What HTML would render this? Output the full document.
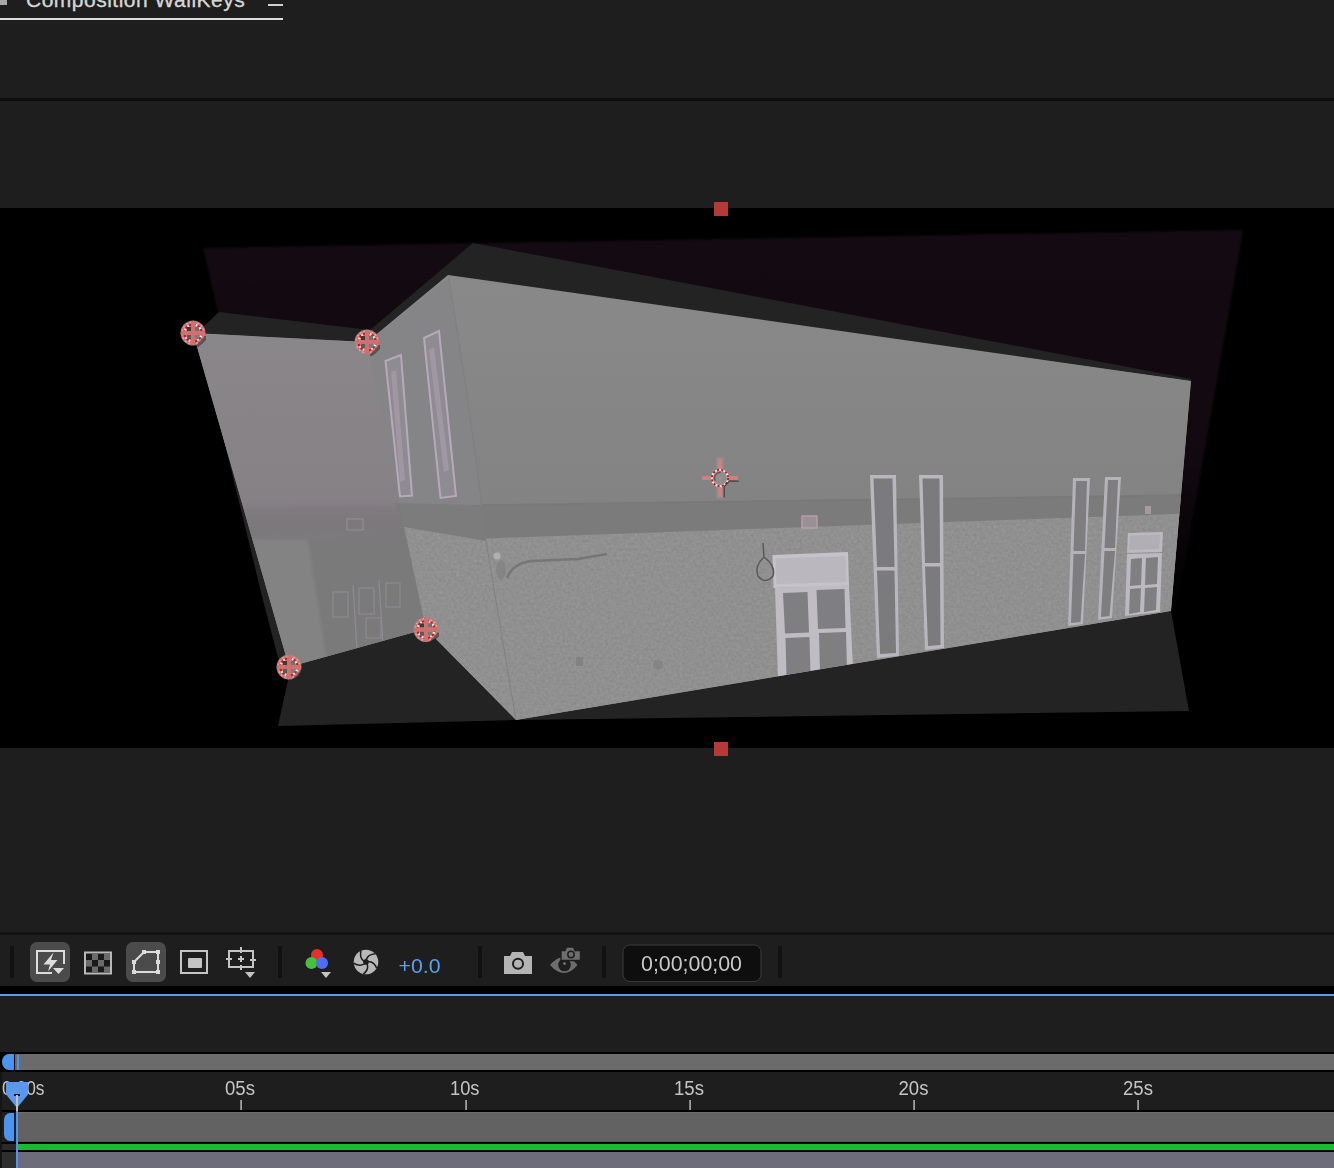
<!DOCTYPE html>
<html><head><meta charset="utf-8">
<style>
html,body{margin:0;padding:0;background:#1e1e1e;width:1334px;height:1168px;overflow:hidden;font-family:"Liberation Sans",sans-serif;}
svg{position:absolute;left:0;top:0;display:block}
</style></head>
<body>
<svg width="1334" height="1168" viewBox="0 0 1334 1168">
<defs>
  <linearGradient id="gLeft" x1="0" y1="333" x2="0" y2="667" gradientUnits="userSpaceOnUse">
    <stop offset="0" stop-color="#8b888a"/>
    <stop offset="0.5" stop-color="#858285"/>
    <stop offset="0.56" stop-color="#7c7b7d"/>
    <stop offset="1" stop-color="#7e7e7e"/>
  </linearGradient>
  <linearGradient id="gPurple" x1="0" y1="230" x2="0" y2="620" gradientUnits="userSpaceOnUse">
    <stop offset="0" stop-color="#140b12"/>
    <stop offset="0.55" stop-color="#130a11"/>
    <stop offset="1" stop-color="#000000"/>
  </linearGradient>
</defs>
<!-- panel bg -->
<rect x="0" y="0" width="1334" height="1168" fill="#1e1e1e"/>
<!-- top tab -->
<rect x="0" y="0" width="7" height="5" fill="#a8a8a8"/>
<text x="26" y="7.3" font-family="Liberation Sans" font-size="21" letter-spacing="0.5" fill="#d6d6d6" stroke="#d6d6d6" stroke-width="0.35">Composition WallKeys</text>
<rect x="268" y="4" width="15" height="2" fill="#cfcfcf"/>
<rect x="0" y="18" width="283" height="2" fill="#dcdcdc"/>
<rect x="0" y="98" width="1334" height="3" fill="#0e0e0e"/>

<!-- comp black -->
<rect x="0" y="208" width="1334" height="540" fill="#000"/>
<!-- purple plate -->
<filter id="fPurp" x="-5%" y="-5%" width="110%" height="110%" color-interpolation-filters="sRGB"><feGaussianBlur stdDeviation="1.2"/></filter>
<polygon points="203,248 1243,230 1175,620 291,620" fill="url(#gPurple)" filter="url(#fPurp)"/>
<!-- dark gray shape -->
<polygon points="204,326 219,312 370,330 473,243 1191,379 1171,611 1189,711 516,720 278,726 288,680 277,654 263,600 208,375 197,338" fill="#232323"/>
<!-- PHOTO START -->
<defs>
  <clipPath id="cpPhoto"><polygon points="193,333 367,342 448,275 1191,381 1171,611 516,720 426,629 289,667"/></clipPath>
  <clipPath id="cpLeft"><polygon points="193,333 367,342 426,629 289,667"/></clipPath>
  <clipPath id="cpFront"><polygon points="449,278 1191,381 1171,611 516,720 486,541 482,506 467,394"/></clipPath>
  <linearGradient id="gWallL" x1="0" y1="333" x2="0" y2="667" gradientUnits="userSpaceOnUse">
    <stop offset="0" stop-color="#8a878a"/>
    <stop offset="0.5" stop-color="#858185"/>
    <stop offset="0.535" stop-color="#827d82"/>
    <stop offset="0.56" stop-color="#7d7b7e"/>
    <stop offset="1" stop-color="#7b7b7b"/>
  </linearGradient>
  <linearGradient id="gUpper" x1="0" y1="280" x2="0" y2="505" gradientUnits="userSpaceOnUse">
    <stop offset="0" stop-color="#898989"/>
    <stop offset="1" stop-color="#838383"/>
  </linearGradient>
  <filter id="fNoise" x="0" y="0" width="100%" height="100%" color-interpolation-filters="sRGB">
    <feTurbulence type="fractalNoise" baseFrequency="0.35" numOctaves="3" seed="7"/>
    <feColorMatrix type="matrix" values="1.4 0 0 0 -0.2  1.4 0 0 0 -0.2  1.4 0 0 0 -0.2  0 0 0 0 1"/>
    <feComposite operator="in" in2="SourceGraphic"/>
  </filter>
  <filter id="fSoft" color-interpolation-filters="sRGB"><feGaussianBlur stdDeviation="0.6"/></filter>
  <filter id="fSoft2" x="-10%" y="-10%" width="120%" height="120%" color-interpolation-filters="sRGB"><feGaussianBlur stdDeviation="1.6"/></filter>
</defs>
<g clip-path="url(#cpPhoto)">
  <rect x="180" y="260" width="1020" height="470" fill="#888888"/>
  <!-- left wing -->
  <g clip-path="url(#cpLeft)">
    <rect x="180" y="320" width="260" height="360" fill="url(#gWallL)"/>
    <g filter="url(#fSoft2)">
    <polygon points="180,508 440,504 440,532 180,538" fill="#7c797c" opacity="0.55"/>
    <line x1="180" y1="508" x2="440" y2="504" stroke="#8e7f88" stroke-width="1.5" opacity="0.7"/>
    <polygon points="308,540 410,532 430,680 330,680" fill="#7a7a7a" opacity="0.75"/>
    <polygon points="250,540 308,540 330,680 260,680" fill="#888888" opacity="0.6"/>
    </g>
    
    <rect x="347" y="519" width="16" height="11" fill="none" stroke="#9a979b" stroke-width="1.2" opacity="0.7"/>
    <g fill="none" stroke="#928d95" stroke-width="1.3" opacity="0.85">
      <rect x="333" y="592" width="15" height="25"/><rect x="359" y="588" width="15" height="26"/><rect x="386" y="583" width="14" height="24"/>
      <rect x="366" y="618" width="15" height="20"/>
      <line x1="353" y1="585" x2="357" y2="650"/>
      <line x1="379" y1="580" x2="383" y2="645"/>
    </g>
  </g>
  <!-- side face -->
  <polygon points="367,342 449,278 467,394 482,506 486,541 404,527" fill="#858486"/>
  
  <polygon points="395,503 482,505 486,541 404,527" fill="#7b7b7b" opacity="0.8"/>
  <polygon points="404,527 486,541 516,720 426,629" fill="#919191"/>
  <polygon points="404,527 486,541 516,720 426,629" fill="#fff" filter="url(#fNoise)" opacity="0.055"/>
  <!-- pink windows on side face -->
  <g filter="url(#fSoft)">
  <polygon points="385.5,361 401,355 412,495.5 400,496.5" fill="#8f8b92" stroke="#b6a9ba" stroke-width="2"/>
  <polygon points="391,372 396,370 405,480 400,482" fill="#a89dab" opacity="0.7"/>
  <polygon points="424,338 439,331 456,496 440.5,498" fill="#8f8b92" stroke="#b6a9ba" stroke-width="2"/>
  <polygon points="429,350 434,347 449,470 444,472" fill="#a89dab" opacity="0.7"/>
  </g>
  <!-- front face -->
  <g clip-path="url(#cpFront)">
    <rect x="440" y="260" width="760" height="470" fill="url(#gUpper)"/>
    <!-- ledge band -->
    <polygon points="440,505 1200,494 1200,516 440,540" fill="#7b7b7b"/>
    <line x1="440" y1="506" x2="1200" y2="495" stroke="#797979" stroke-width="1.5"/>
    <!-- brick -->
    <polygon points="440,540 1200,513 1200,730 440,730" fill="#919191"/>
    <polygon points="440,540 1200,513 1200,730 440,730" fill="#fff" filter="url(#fNoise)" opacity="0.055"/>
    <!-- pipe -->
    <path d="M507,578 Q513,563 532,561 L578,559 L607,554" fill="none" stroke="#6e6e6e" stroke-width="2.4" opacity="0.75" filter="url(#fSoft)"/>
    <circle cx="658" cy="665" r="5" fill="#7a7a7a" opacity="0.5"/>
    <rect x="576" y="657" width="7" height="9" fill="#7a7a7a" opacity="0.6"/>
    <!-- sign -->
    <rect x="802" y="516" width="15" height="12" fill="#9a8f95" stroke="#c0a4ac" stroke-width="1.2"/>
    <rect x="1145" y="506" width="6" height="8" fill="#a59aa0"/>
    <g filter="url(#fSoft)">
    <!-- door 1 -->
    <polygon points="772.5,555 848,552 849,586 773.5,588" fill="#c6c2ca"/>
    <polygon points="775.5,558.5 845.5,556 846.5,582 776.5,584" fill="#bab7be"/>
    <polygon points="775,588 849,585 853,668 778,678" fill="#c0bcc4"/>
    <polygon points="783,593 807.5,592 809,632.5 785,633.5" fill="#7f7f81"/>
    <polygon points="816.5,590 844.5,589 845.5,628 818,629" fill="#7f7f81"/>
    <polygon points="785.5,638 809.5,637 810.5,676 786.5,677" fill="#7f7f81"/>
    <polygon points="819,633 846,632 847,670 820,672" fill="#7f7f81"/>
    <!-- windows -->
    <polygon points="870,475 896,475 899,656 877,658" fill="#bab6be"/>
    <polygon points="873.5,478.5 892.5,478.5 894.5,567 877,567" fill="#7b7b7d"/>
    <polygon points="877,570.5 894.5,570.5 896,653 880,654" fill="#7b7b7d"/>
    <polygon points="919,475 943,475 944,648 925,650" fill="#bab6be"/>
    <polygon points="922.5,478.5 939.5,478.5 940,563 925,563" fill="#7b7b7d"/>
    <polygon points="925,566.5 940,566.5 940.5,645 928,646" fill="#7b7b7d"/>
    <polygon points="1073,478 1090,478 1083,624 1068,626" fill="#b5b2b9"/>
    <polygon points="1076,481 1087,481 1085,551 1073.5,551" fill="#7e7e80"/>
    <polygon points="1073.5,554 1085,554 1080.5,622 1071,623" fill="#7e7e80"/>
    <polygon points="1105,477 1121,477 1112,618 1098,620" fill="#b5b2b9"/>
    <polygon points="1108,480 1118,480 1115,548 1104.5,548" fill="#7e7e80"/>
    <polygon points="1104.5,551 1115,551 1109.5,616 1101,617" fill="#7e7e80"/>
    <!-- door 2 -->
    <polygon points="1128,533 1163,532 1162,552 1127,553" fill="#bdb9c1"/>
    <polygon points="1130,535.5 1160,534.5 1159,549 1129,550" fill="#b1aeb5"/>
    <polygon points="1127,554 1162,553 1160,612 1125,616" fill="#bdb9c1"/>
    <polygon points="1131,559 1142,558 1141,585 1130,586" fill="#7f7f81"/>
    <polygon points="1146,558 1158,557 1157,584 1145,585" fill="#7f7f81"/>
    <polygon points="1130,589 1141,588 1140,612 1129,614" fill="#7f7f81"/>
    <polygon points="1145,588 1157,587 1156,610 1144,612" fill="#7f7f81"/>
    </g>
    <!-- hook -->
    <path d="M763,543 L764,557 Q754,566 758,576 Q765,585 773,576 Q776,566 764,557" fill="none" stroke="#5a5a5a" stroke-width="1.5" filter="url(#fSoft)"/>
  </g>

    <ellipse cx="501" cy="570" rx="5" ry="10" fill="#7e7e7e" opacity="0.6" filter="url(#fSoft)"/>
    <circle cx="497" cy="556" r="3.5" fill="#b8b8b8" opacity="0.8" filter="url(#fSoft)"/>
  <!-- building corner line -->
  <polyline points="449,278 467,394 482,506 486,541 516,720" fill="none" stroke="#7c7c7c" stroke-width="1.2" opacity="0.55"/>
</g>
<!-- PHOTO END -->


<!-- markers -->
<defs>
 <g id="mk">
  <circle r="12.3" fill="#c97272" stroke="#8a8a8a" stroke-width="0.8" stroke-opacity="0.6"/>
  <circle r="11" fill="none" stroke="#e0c4c4" stroke-width="1.6" stroke-dasharray="2 2" opacity="0.6"/>
  <circle r="8.6" fill="none" stroke="#f0e4e4" stroke-width="2.2"/>
  <circle r="8.6" fill="none" stroke="#c21d1d" stroke-width="2.2" stroke-dasharray="2.5 2"/>
  <circle r="6.6" fill="#a09a9a"/>
  <rect x="-6" y="-6" width="4" height="4" fill="#3a3a3a"/>
  <rect x="2" y="-6" width="4" height="4" fill="#707070"/>
  <rect x="-6" y="2" width="4" height="4" fill="#5a5a5a"/>
  <rect x="2" y="2" width="4" height="4" fill="#7a7a7a"/>
  <rect x="-2" y="-12" width="4" height="24" fill="#cf7070"/>
  <rect x="-12" y="-2" width="24" height="4" fill="#cf7070"/>
  <path d="M11.5,3 L13,3 L13,7 L9,11 L5,14 L3,14 L3,12.5 Z" fill="#222" opacity="0.5"/>
 </g>
</defs>
<use href="#mk" x="193" y="333"/>
<use href="#mk" x="367" y="342"/>
<use href="#mk" x="426" y="629.5"/>
<use href="#mk" x="289" y="667"/>
<g transform="translate(720,478)">
  <rect x="-2" y="-19" width="4" height="38" fill="#cc8080"/>
  <rect x="-18" y="-2" width="36" height="4" fill="#cc8080"/>
  <rect x="-3" y="-20" width="6" height="40" fill="none" stroke="#b0b0b0" stroke-width="0.8" opacity="0.5"/>
  <circle r="8.2" fill="#909090" stroke="#f0e0e0" stroke-width="2"/>
  <circle r="8.2" fill="none" stroke="#c21d1d" stroke-width="2" stroke-dasharray="2.2 2.2"/>
  <circle r="5.5" fill="#8e8e8e" stroke="#5a5a5a" stroke-width="1.4" stroke-dasharray="12 30" transform="rotate(150)"/>
  <rect x="-1.5" y="-1.5" width="3" height="3" fill="#b08888"/>
  <path d="M18.5,3.2 H9.5 L4.2,8.5 V19.5" fill="none" stroke="#333" stroke-width="1.2" opacity="0.85"/>
</g>

<!-- red handles -->
<rect x="714" y="202" width="14" height="14" fill="#b83838"/>
<rect x="714" y="742" width="14" height="14" fill="#b83838"/>

<!-- toolbar -->
<rect x="0" y="932" width="1334" height="3" fill="#111"/>
<rect x="0" y="986" width="1334" height="8" fill="#000"/>
<rect x="0" y="994" width="1334" height="2" fill="#5b9bf0"/>


<!-- toolbar icons -->
<rect x="10" y="946" width="4" height="32" fill="#111"/>
<rect x="30" y="942" width="40" height="40" rx="7" fill="#4b4b4b"/>
<path d="M64,964 V951 H37 V973 H52" fill="none" stroke="#dcdcdc" stroke-width="2"/>
<path d="M53.5,952.5 L43.5,964.5 H50 L48,971.5 L57.5,960 H51 Z" fill="#dcdcdc"/>
<path d="M53,968 H64 L58.5,974 Z" fill="#dcdcdc"/>
<rect x="85" y="952.5" width="26" height="21" fill="#1a1a1a" stroke="#b8b8b8" stroke-width="2"/>
<g fill="#6b6b6b">
 <rect x="92" y="953.5" width="6" height="6.5"/><rect x="104" y="953.5" width="6" height="6.5"/>
 <rect x="86" y="960" width="6" height="6.5"/><rect x="98" y="960" width="6" height="6.5"/>
 <rect x="92" y="966.5" width="6" height="6.5"/><rect x="104" y="966.5" width="6" height="6.5"/>
</g>
<rect x="126" y="942" width="40" height="40" rx="7" fill="#4b4b4b"/>
<path d="M134,962 L144,952 H158 V972 H134 Z" fill="none" stroke="#dcdcdc" stroke-width="2"/>
<g fill="#dcdcdc">
 <rect x="132" y="960" width="4" height="4"/><rect x="142" y="950" width="4" height="4"/><rect x="156" y="950" width="4" height="4"/>
 <rect x="156" y="960" width="4" height="4"/><rect x="156" y="970" width="4" height="4"/><rect x="132" y="970" width="4" height="4"/>
</g>
<rect x="181" y="951" width="26" height="22" fill="none" stroke="#c4c4c4" stroke-width="2"/>
<rect x="188" y="958" width="14" height="10" rx="1" fill="#c4c4c4"/>
<rect x="229" y="951" width="24" height="16" fill="none" stroke="#c4c4c4" stroke-width="2"/>
<g fill="#c4c4c4">
 <rect x="240" y="947" width="2" height="6"/><rect x="240" y="965" width="2" height="5"/>
 <rect x="226" y="958" width="6" height="2"/><rect x="250" y="959" width="6" height="2"/>
 <rect x="238" y="958" width="6" height="2"/><rect x="240" y="956" width="2" height="6"/>
</g>
<path d="M245,972 H255 L250,978 Z" fill="#c4c4c4"/>
<rect x="278" y="946" width="4" height="32" fill="#111"/>
<circle cx="317" cy="955" r="6" fill="#e8302a"/>
<circle cx="311.5" cy="963" r="6" fill="#45c23a"/>
<circle cx="322" cy="963" r="6" fill="#4f6ef5"/>
<path d="M321,972 H331 L326,978 Z" fill="#c4c4c4"/>
<g transform="translate(366,962)"><circle r="12.3" fill="#b8b8b8"/><path d="M0,-3.4 L3.2,-1 L2,2.8 L-2,2.8 L-3.2,-1 Z" fill="#1e1e1e"/><g fill="none" stroke="#1e1e1e" stroke-width="1.5"><path d="M-5,-11.4 Q-6.8,-4 -2.2,-1.2" transform="rotate(0)"/><path d="M-5,-11.4 Q-6.8,-4 -2.2,-1.2" transform="rotate(72)"/><path d="M-5,-11.4 Q-6.8,-4 -2.2,-1.2" transform="rotate(144)"/><path d="M-5,-11.4 Q-6.8,-4 -2.2,-1.2" transform="rotate(216)"/><path d="M-5,-11.4 Q-6.8,-4 -2.2,-1.2" transform="rotate(288)"/></g></g>
<text x="398.5" y="973" font-family="Liberation Sans" font-size="21" textLength="42" lengthAdjust="spacingAndGlyphs" fill="#5a9ff0">+0.0</text>
<rect x="478" y="946" width="4" height="32" fill="#111"/>
<path d="M504,956 H510 L512,952 H523 L525,956 H532 V974 H504 Z" fill="#b4b4b4"/>
<circle cx="518" cy="963.8" r="5" fill="none" stroke="#1e1e1e" stroke-width="2"/>
<path d="M550,965 Q564,949 577.5,965 Q564,981 550,965 Z" fill="#6e6e6e"/>
<circle cx="564.5" cy="965" r="6.3" fill="#1e1e1e"/>
<circle cx="564.5" cy="963.6" r="1.3" fill="#7a7a7a"/>
<path d="M561,950.5 H565 L566.5,947 H573.5 L575,950.5 H580.5 V960.5 H561 Z" fill="#6e6e6e" stroke="#1e1e1e" stroke-width="1.4"/>
<circle cx="571" cy="954.5" r="3.2" fill="#6e6e6e" stroke="#1e1e1e" stroke-width="1.5"/>
<rect x="602" y="946" width="4" height="32" fill="#111"/>
<rect x="623" y="945" width="138" height="36.5" rx="7" fill="#0e0e0e" stroke="#3a3a3a" stroke-width="1"/>
<text x="641" y="970.5" font-family="Liberation Sans" font-size="21.5" textLength="101" lengthAdjust="spacingAndGlyphs" fill="#c8c8c8">0;00;00;00</text>
<rect x="778" y="946" width="4" height="32" fill="#111"/>

<!-- timeline -->
<rect x="0" y="1052" width="1334" height="20" fill="#000"/>
<rect x="15" y="1054" width="1319" height="16" fill="#6b6b6b"/>
<rect x="0" y="1110" width="1334" height="2" fill="#000"/>
<rect x="16" y="1112" width="1318" height="30" fill="#626262"/>
<rect x="16" y="1112" width="1318" height="1" fill="#6e6e6e"/>
<rect x="16" y="1141" width="1318" height="1" fill="#575757"/>
<rect x="0" y="1142" width="1334" height="2" fill="#000"/>
<rect x="18" y="1144" width="1316" height="6" fill="#16bc29"/>
<rect x="0" y="1150" width="1334" height="2" fill="#000"/>
<rect x="16" y="1152" width="1318" height="16" fill="#6d6c7a"/>

<!-- timeline details -->
<path d="M14,1054 H9 A7,8 0 0 0 9,1070 H14 Z" fill="#4a95f0"/>
<rect x="17" y="1055" width="2" height="15" fill="#4a95f0"/>
<path d="M14,1113 H10 A6,7 0 0 0 4,1120 V1134 A6,7 0 0 0 10,1141 H14 Z" fill="#4a95f0"/>
<rect x="2" y="1144" width="14" height="6" fill="#2a2a2a"/>
<rect x="2" y="1152" width="14" height="16" fill="#2e2e2e"/>
<g font-family="Liberation Sans" font-size="20.5" fill="#c4c4c4" lengthAdjust="spacingAndGlyphs">
<text x="2" y="1094.5" textLength="42.5" lengthAdjust="spacingAndGlyphs">0;00s</text>
<text x="225" y="1094.5" textLength="30" lengthAdjust="spacingAndGlyphs">05s</text>
<text x="450" y="1094.5" textLength="29.5" lengthAdjust="spacingAndGlyphs">10s</text>
<text x="674" y="1094.5" textLength="30" lengthAdjust="spacingAndGlyphs">15s</text>
<text x="898.5" y="1094.5" textLength="30" lengthAdjust="spacingAndGlyphs">20s</text>
<text x="1123" y="1094.5" textLength="30" lengthAdjust="spacingAndGlyphs">25s</text>
</g>
<g fill="#b0b0b0">
<rect x="240.3" y="1100" width="1.6" height="10"/>
<rect x="465.3" y="1100" width="1.6" height="10"/>
<rect x="689.3" y="1100" width="1.6" height="10"/>
<rect x="913.3" y="1100" width="1.6" height="10"/>
<rect x="1137.3" y="1100" width="1.6" height="10"/>
</g>
<rect x="0" y="1072" width="2" height="96" fill="#151515"/>
<path d="M6,1082 H28 V1094.5 L17,1108 L6,1094.5 Z" fill="#5a98ec"/>
<rect x="14" y="1094" width="6" height="2" fill="#111"/>
<rect x="16" y="1095" width="2" height="16" fill="#c8c0b8"/>
<rect x="16" y="1111" width="2" height="57" fill="#4f95ee"/>
</svg>
</body></html>
